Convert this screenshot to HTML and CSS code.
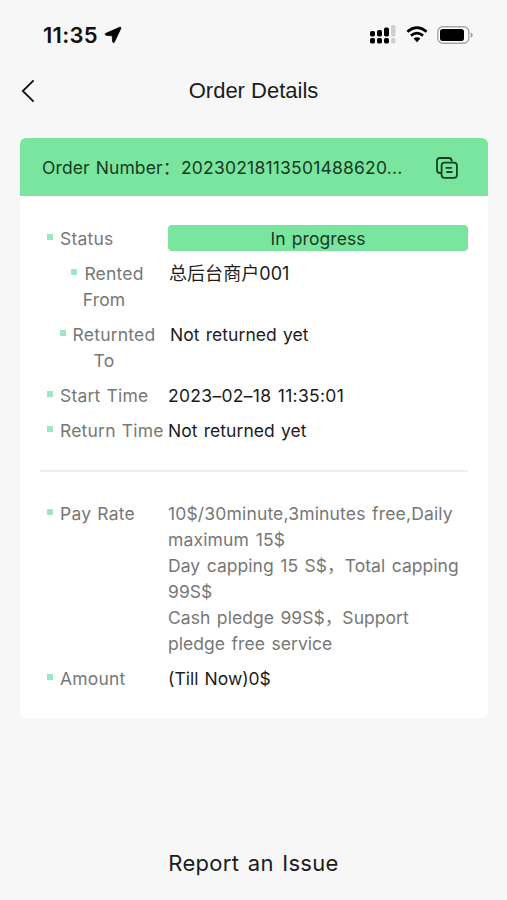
FILE: index.html
```html
<!DOCTYPE html>
<html lang="en">
<head>
    <meta charset="UTF-8">
    <meta name="viewport" content="width=device-width, initial-scale=1.0">
    <title>Order Details</title>
    <link rel="stylesheet" href="styles.css">
</head>
<body>
    <div class="status-bar">
        <span class="time">11:35</span>
        <svg class="location" width="18" height="18" viewBox="0 0 18 18"><path d="M15.8 1.2L1.4 7.6Q.6 8.7 2 9.3L8.2 9.8L8.7 16Q9.3 17.3 10.3 16.2L16.9 2.2Q17 .8 15.8 1.2Z" stroke="#000" stroke-width=".8"/></svg>
        <svg class="signal" width="26" height="19" viewBox="0 0 26 19">
            <rect x="0" y="6" width="5" height="5.5" rx="1.7"/>
            <rect x="7" y="5" width="5" height="6.5" rx="1.7"/>
            <rect x="14" y="2.5" width="5" height="9" rx="1.7"/>
            <rect x="0" y="13" width="5" height="5.5" rx="1.7"/>
            <rect x="7" y="13" width="5" height="5.5" rx="1.7"/>
            <rect x="14" y="13" width="5" height="5.5" rx="1.7"/>
            <rect x="21" y="0" width="4.5" height="11.5" rx="1.7" fill="#cfcfcf"/>
            <rect x="21" y="13" width="4.5" height="5.5" rx="1.7" fill="#cfcfcf"/>
        </svg>
        <svg class="wifi" width="22" height="17" viewBox="0 0 22 17">
            <path d="M1.4 5.8Q11-2.4 20.6 5.8M5 9.6Q11 4.6 17 9.6" fill="none" stroke="#000" stroke-width="2.7"/>
            <path d="M7.6 12.6Q11 10 14.4 12.6L11 16.3Z"/>
        </svg>
        <svg class="battery" width="36" height="18" viewBox="0 0 36 18">
            <rect x=".8" y=".8" width="31" height="16.4" rx="5" fill="#fff" stroke="#a5a5a5" stroke-width="1.4"/>
            <rect x="3" y="3" width="24" height="12" rx="2.8"/>
            <path d="M33.8 6.2Q37.8 9 33.8 11.8Z" fill="#999"/>
        </svg>
    </div>

    <div class="nav-bar">
        <svg class="back" width="14" height="24" viewBox="0 0 14 24"><path d="M12.6 1.4L1.8 12L12.6 22.6" fill="none" stroke="#111" stroke-width="1.8"/></svg>
        <h1>Order Details</h1>
    </div>

    <div class="card">
        <div class="card-header">
            <span class="order-label">Order Number：</span>
            <span class="order-number">20230218113501488620...</span>
            <svg class="copy" width="22" height="22" viewBox="0 0 22 22" fill="none" stroke="#164127" stroke-width="1.8">
                <path d="M5.5 16H4Q1 16 1 13V4Q1 1 4 1H13Q15.7 1 15.9 4.5"/>
                <rect x="5.6" y="5.6" width="15.3" height="15.3" rx="2.8"/>
                <path d="M9.5 10.8H16M10.3 15H16.5"/>
            </svg>
        </div>

        <div class="section">
            <div class="row">
                <div class="label">Status</div>
                <div class="value badge">In progress</div>
            </div>
            <div class="row">
                <div class="label wrapped">Rented <span class="second">From</span></div>
                <div class="value shop">总后台商户001</div>
            </div>
            <div class="row">
                <div class="label wrapped">Returnted <span class="second">To</span></div>
                <div class="value inset">Not returned yet</div>
            </div>
            <div class="row">
                <div class="label">Start Time</div>
                <div class="value date">2023–02–18 11:35:01</div>
            </div>
            <div class="row">
                <div class="label">Return Time</div>
                <div class="value">Not returned yet</div>
            </div>
        </div>

        <div class="section">
            <div class="row">
                <div class="label">Pay Rate</div>
                <div class="value rate">
                    <div class="daily">10$/30minute,3minutes free,Daily<br>maximum 15$</div>
                    <div>Day capping 15 S$，Total capping<br>99S$</div>
                    <div>Cash pledge 99S$，Support<br>pledge free service</div>
                </div>
            </div>
            <div class="row">
                <div class="label">Amount</div>
                <div class="value amount">(Till Now)0$</div>
            </div>
        </div>
    </div>

    <div class="report">Report an Issue</div>
</body>
</html>
```
FILE: styles.css
```css
* {
    box-sizing: border-box;
}

body {
    margin: 0;
    height: 900px;
    background-color: #f7f7f7;
    color: #1c1c1c;
    font-family: Inter, 'Noto Sans CJK SC', sans-serif;
    font-size: 17.5px;
    line-height: 26px;
    overflow: hidden;
}

svg {
    display: block;
    flex: none;
}

.status-bar {
    display: flex;
    align-items: center;
    height: 69px;
    padding: 0 34px 0 43px;
}

.time {
    font-size: 22px;
    font-weight: 600;
    letter-spacing: 0.3px;
    color: #111;
}

.location {
    margin-left: 6px;
}

.signal {
    margin-left: auto;
}

.wifi {
    margin: 0 9px 0 10px;
}

.nav-bar {
    display: grid;
    grid-template-columns: 40px 1fr 40px;
    align-items: center;
    height: 44px;
    padding: 0 21px;
}

h1 {
    margin: 0;
    font-family: 'Liberation Sans', sans-serif;
    font-size: 22px;
    font-weight: normal;
    text-align: center;
    white-space: nowrap;
    color: #1c1c1c;
}

.card {
    height: 580px;
    margin: 25px 19px 0 20px;
    border-radius: 6px;
    background-color: #fff;
    overflow: hidden;
}

.card-header {
    display: flex;
    align-items: center;
    height: 58px;
    padding: 1px 30px 0 22px;
    background-color: #79e59f;
    color: #173b25;
    white-space: nowrap;
}

.order-label {
    width: 139px;
    letter-spacing: 0.1px;
    word-spacing: 1px;
}

.order-number {
    letter-spacing: 0.2px;
}

.copy {
    margin-left: auto;
}

.section {
    display: flex;
    flex-direction: column;
    gap: 9px;
    margin: 0 20px;
    padding: 30px 0 26px;
}

.section + .section {
    border-top: 2px solid #eee;
    padding-top: 29px;
}

.row {
    display: flex;
}

.label {
    flex: none;
    width: 128px;
    padding-left: 7px;
    color: #777;
    letter-spacing: 0.2px;
    word-spacing: 1px;
    white-space: nowrap;
}

.label::before {
    content: '';
    display: inline-block;
    width: 6px;
    height: 6px;
    margin-right: 7px;
    vertical-align: 5px;
    background-color: #9be8c2;
}

.wrapped {
    text-align: center;
}

.second {
    display: block;
    padding-right: 7px;
}

.value {
    flex: 1;
    letter-spacing: 0.05px;
    word-spacing: 1.2px;
    white-space: nowrap;
}

.badge {
    height: 26px;
    margin: -1px 0 1px;
    border-radius: 4px;
    background-color: #79e59f;
    color: #173b25;
    line-height: 28px;
    text-align: center;
}

.shop {
    padding-left: 1px;
    font-size: 18px;
}

.inset {
    padding-left: 2px;
}

.date {
    letter-spacing: 0.3px;
}

.rate {
    color: #777;
    word-spacing: 1.5px;
}

.daily {
    letter-spacing: 0.16px;
}

.amount {
    letter-spacing: 0;
}

.report {
    margin-top: 132px;
    font-size: 22px;
    letter-spacing: 0.3px;
    word-spacing: 2px;
    text-align: center;
}
```
